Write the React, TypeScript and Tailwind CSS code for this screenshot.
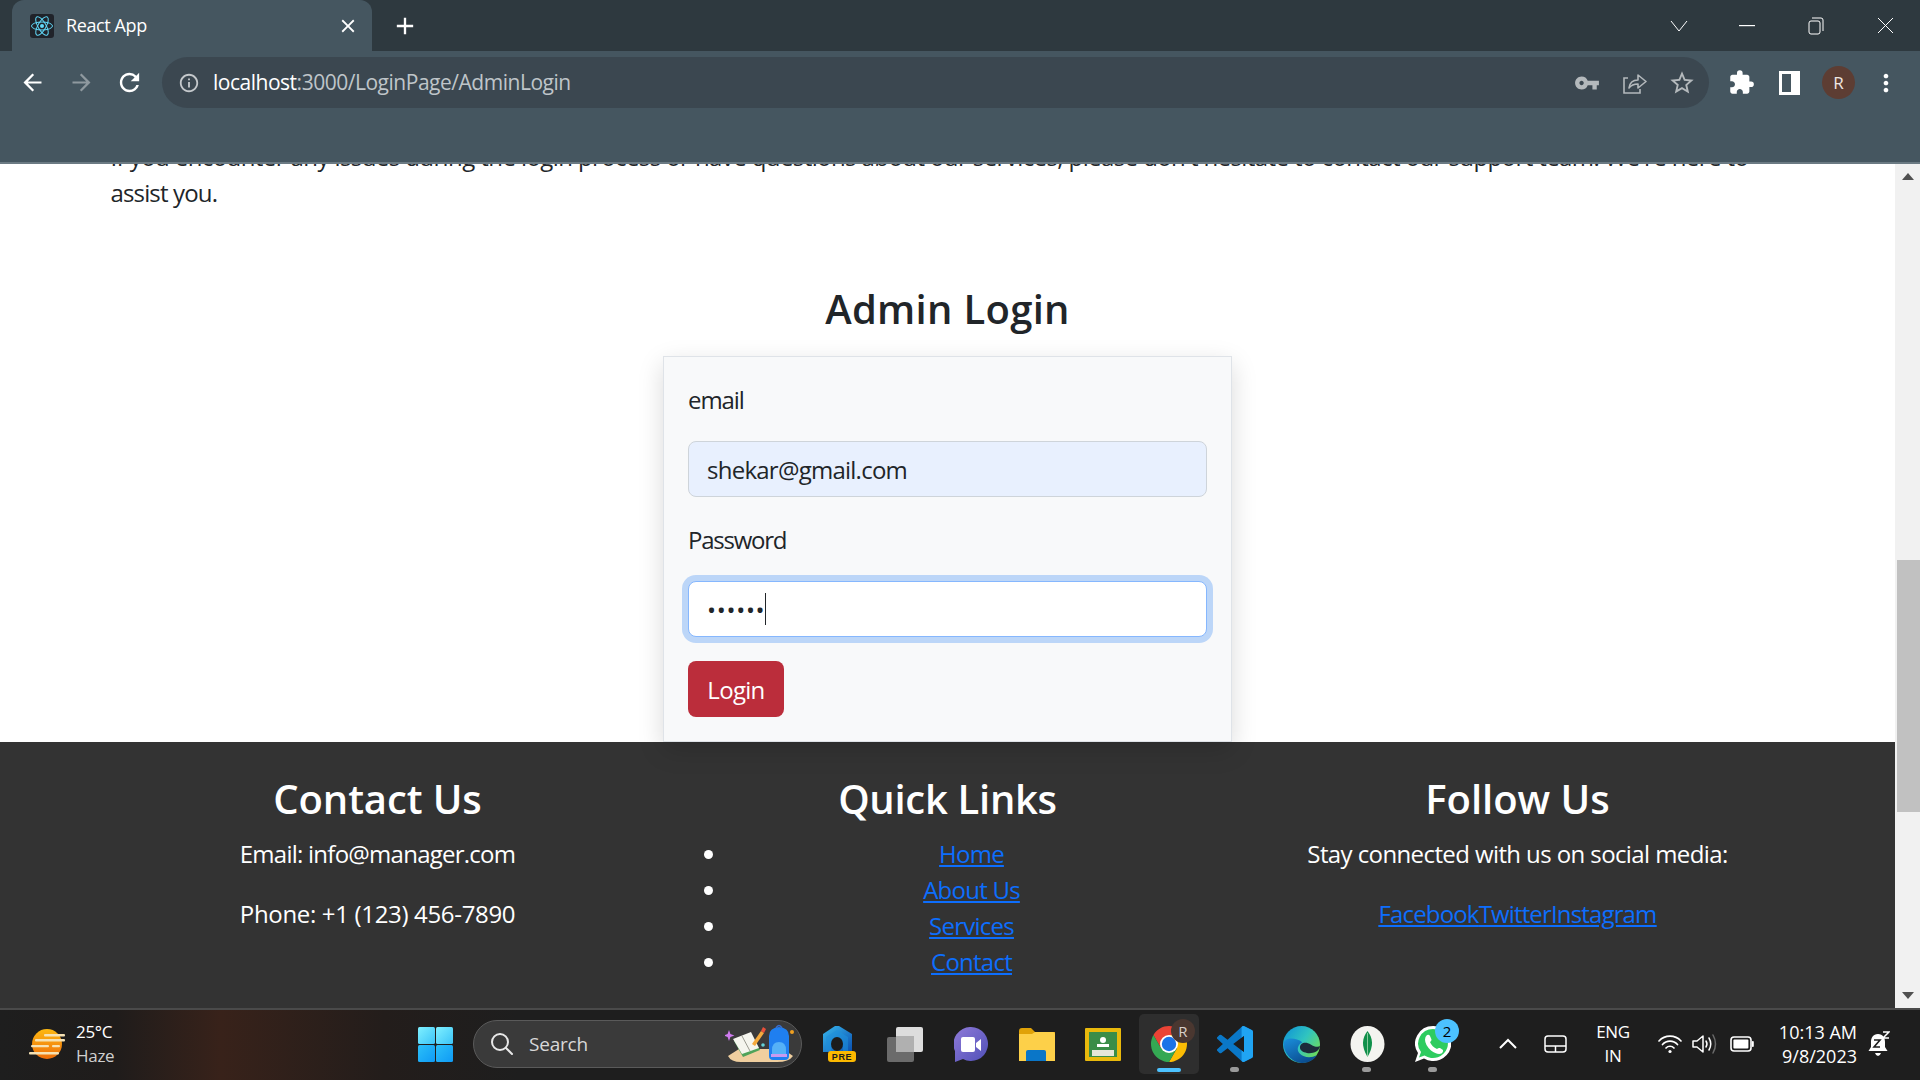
import React from "react";
import { MdArrowBack, MdArrowForward, MdRefresh, MdInfoOutline, MdVpnKey, MdStarBorder, MdExtension, MdMoreVert, MdClose, MdAdd } from "react-icons/md";

const SI = "M23.15 2.587L18.21.21a1.494 1.494 0 0 0-1.705.29l-9.46 8.63-4.12-3.128a.999.999 0 0 0-1.276.057L.327 7.261A1 1 0 0 0 .326 8.74L3.899 12 .326 15.26a1 1 0 0 0 .001 1.479L1.65 17.94a.999.999 0 0 0 1.276.057l4.12-3.128 9.46 8.63a1.492 1.492 0 0 0 1.704.29l4.942-2.377A1.5 1.5 0 0 0 24 20.06V3.939a1.5 1.5 0 0 0-.85-1.352zm-5.146 14.861L10.826 12l7.178-5.448v10.896z";

function ReactFav() {
  return (
    <svg width="24" height="24" viewBox="0 0 24 24" className="shrink-0">
      <rect width="24" height="24" rx="3" fill="#20232a" />
      <g fill="none" stroke="#61dafb" strokeWidth="1">
        <ellipse cx="12" cy="12" rx="10.5" ry="4" />
        <ellipse cx="12" cy="12" rx="10.5" ry="4" transform="rotate(60 12 12)" />
        <ellipse cx="12" cy="12" rx="10.5" ry="4" transform="rotate(120 12 12)" />
      </g>
      <circle cx="12" cy="12" r="2" fill="#61dafb" />
    </svg>
  );
}

function Weather() {
  return (
    <svg width="36" height="30" viewBox="0 0 36 30">
      <defs>
        <linearGradient id="wx" x1="0" y1="0" x2="0" y2="1"><stop offset="0" stopColor="#fdb913" /><stop offset="1" stopColor="#ee6d0a" /></linearGradient>
      </defs>
      <ellipse cx="18" cy="15" rx="15" ry="15" fill="url(#wx)" />
      <g fill="#f6e2b4">
        <rect x="15" y="5" width="21" height="2.4" rx="1" />
        <rect x="6" y="10" width="30" height="2.6" rx="1" />
        <rect x="2" y="16" width="18" height="2.2" rx="1" />
        <rect x="23" y="16" width="8" height="2.2" rx="1" />
        <rect x="0" y="23" width="30" height="2.4" rx="1" />
      </g>
    </svg>
  );
}

function WinLogo() {
  return (
    <svg width="35" height="35" viewBox="0 0 35 35">
      <defs>
        <linearGradient id="w1" x1="0" y1="0" x2="1" y2="1"><stop offset="0" stopColor="#7ff0ff" /><stop offset="1" stopColor="#3cc4f8" /></linearGradient>
        <linearGradient id="w2" x1="0" y1="0" x2="1" y2="1"><stop offset="0" stopColor="#2cc0f8" /><stop offset="1" stopColor="#0f9af5" /></linearGradient>
      </defs>
      <rect x="0" y="0" width="17" height="17" rx="1.5" fill="url(#w1)" />
      <rect x="18" y="0" width="17" height="17" rx="1.5" fill="url(#w1)" />
      <rect x="0" y="18" width="17" height="17" rx="1.5" fill="url(#w2)" />
      <rect x="18" y="18" width="17" height="17" rx="1.5" fill="url(#w2)" />
    </svg>
  );
}

function SearchDecor() {
  return (
    <svg width="70" height="40" viewBox="0 0 70 40">
      <path d="M3 32 L14 25 H58 L68 32 Q64 38 52 38 H16 Q6 38 3 32Z" fill="#f0cf9f" />
      <path d="M9 17 L26 10 L35 26 L18 33Z" fill="#4fa35a" />
      <path d="M8 15 L26 8 L34 24 L17 30Z" fill="#f5f5ee" />
      <path d="M17 12 L25 27" stroke="#9a9a90" strokeWidth="1" />
      <path d="M27 20 L36 7 L39 9 L30 22Z" fill="#f4a93c" />
      <path d="M36 7 L38 3 L41 5 L39 9Z" fill="#e8503a" />
      <circle cx="38" cy="21" r="1.8" fill="#63d1d8" />
      <path d="M44 12 Q44 4 54 3 Q64 4 64 12 V32 Q64 36 60 36 H48 Q44 36 44 32Z" fill="#1f7ff0" />
      <path d="M47 26 Q47 18 54 18 Q61 18 61 26 V31 H47Z" fill="#55b1f7" />
      <rect x="46" y="30" width="16" height="3" fill="#c89af0" />
      <path d="M51 4 Q54 -1 57 4" fill="none" stroke="#3a6fd0" strokeWidth="1.5" />
      <path d="M2 6 L3.4 10 L7.4 11.5 L3.4 13 L2 17 L0.6 13 L-3 11.5 L0.6 10Z" transform="translate(2 0)" fill="#d07bf0" />
      <circle cx="67" cy="8" r="2" fill="#f0a020" />
    </svg>
  );
}

function Copilot() {
  return (
    <svg width="36" height="36" viewBox="0 0 36 36">
      <defs>
        <linearGradient id="cp" x1="0" y1="0" x2="1" y2="1"><stop offset="0" stopColor="#38b8ee" /><stop offset="1" stopColor="#0a4fb0" /></linearGradient>
      </defs>
      <path d="M14 0 L18 0 L31 8 V26 H2 V8Z" fill="url(#cp)" />
      <path d="M16 4 L27 11 V25 H22 V18 A6 6 0 0 0 10 18 V25 H5 V11Z" fill="#1e90dc" opacity="0.55" />
      <ellipse cx="16" cy="18" rx="6" ry="7" fill="#1c1c1c" />
      <rect x="7" y="25" width="28" height="11" rx="3" fill="#fcb900" />
      <text x="21" y="34" textAnchor="middle" fontFamily="Liberation Sans" fontWeight="700" fontSize="9" fill="#1c1c1c" letterSpacing="0.6">PRE</text>
    </svg>
  );
}

function TaskView() {
  return (
    <div className="relative h-[35px] w-[36px]">
      <div className="absolute bottom-0 left-0 h-[25px] w-[27px] rounded-[2px] bg-[#6b6b6b]" />
      <div className="absolute right-0 top-0 h-[25px] w-[27px] rounded-[2px] bg-[#f2f2f2] opacity-90" />
      <div className="absolute left-[9px] top-[9px] h-[16px] w-[18px] bg-[#b0b0b0]" />
    </div>
  );
}

function Meet() {
  return (
    <svg width="34" height="35" viewBox="0 0 34 35">
      <defs>
        <linearGradient id="mt" x1="0" y1="0" x2="1" y2="1"><stop offset="0" stopColor="#8f7ad8" /><stop offset="1" stopColor="#5050b8" /></linearGradient>
      </defs>
      <path d="M17 0 A17 17 0 1 1 9 32 L1 35 L1 24 A17 17 0 0 1 17 0Z" fill="url(#mt)" />
      <rect x="7" y="10" width="14" height="15" rx="2" fill="#fff" />
      <path d="M22 16 L27 12 V24 L22 20Z" fill="#fff" />
    </svg>
  );
}

function Folder() {
  return (
    <svg width="36" height="33" viewBox="0 0 36 33">
      <path d="M0 3 Q0 0 3 0 H12 L16 4 H36 V12 H0Z" fill="#e0a208" />
      <path d="M0 6 H13 L16 4 H34 Q36 4 36 6 V33 H0Z" fill="#fdd049" />
      <path d="M7 33 V24 Q7 22 9 22 H25 Q27 22 27 24 V33Z" fill="#0a76c8" />
    </svg>
  );
}

function Classroom() {
  return (
    <svg width="36" height="33" viewBox="0 0 36 33">
      <rect width="36" height="33" rx="1" fill="#e9b90c" />
      <rect x="4" y="4" width="28" height="25" fill="#3a8d48" />
      <circle cx="18" cy="12" r="3" fill="#fff" />
      <rect x="12" y="16" width="12" height="3" fill="#fff" />
      <rect x="7" y="22" width="22" height="6" fill="#e6e6d8" />
    </svg>
  );
}

function Chrome() {
  return (
    <svg width="36" height="36" viewBox="4 4 40 40">
      <path d="M24 14H41.32A20 20 0 0 0 6.68 14L15.34 29 24 24Z" fill="#ea4335" />
      <path d="M41.32 14H24L32.66 29 24 44A20 20 0 0 0 41.32 14Z" fill="#fbbc04" />
      <path d="M24 44 32.66 29H15.34L6.68 14A20 20 0 0 0 24 44Z" fill="#34a853" />
      <circle cx="24" cy="24" r="10" fill="#fff" />
      <circle cx="24" cy="24" r="8" fill="#1a73e8" />
    </svg>
  );
}

function VSCode() {
  return (
    <svg width="36" height="36" viewBox="0 0 24 24">
      <defs>
        <clipPath id="vsr"><rect x="16.4" y="0" width="8" height="24" /></clipPath>
      </defs>
      <path d={SI} fill="#0a78c8" />
      <path d={SI} fill="#20a4f3" clipPath="url(#vsr)" />
    </svg>
  );
}

function Edge() {
  return (
    <svg width="37" height="37" viewBox="0 0 48 48">
      <defs>
        <linearGradient id="eg" x1="0" y1="0" x2="1" y2="0.7"><stop offset="0" stopColor="#0c8fd8" /><stop offset="0.55" stopColor="#30c4c0" /><stop offset="1" stopColor="#6fdc58" /></linearGradient>
        <linearGradient id="eb" x1="0" y1="0" x2="0.6" y2="1"><stop offset="0" stopColor="#1a8fdc" /><stop offset="1" stopColor="#0b4d90" /></linearGradient>
      </defs>
      <circle cx="24" cy="24" r="24" fill="url(#eg)" />
      <path d="M1 22 C1 38 14 48 26 48 C33 48 40 44 44 38 C36 42 27 41 22 36 C17 31 19 24 25 21 C17 15 3 14 1 22Z" fill="url(#eb)" />
      <path d="M22 28 C22 21 30 20 36 24 C40 27 46 28 48 26 C47 34 38 36 31 35 C26 34 22 32 22 28Z" fill="#1c2b3a" />
    </svg>
  );
}

function Mongo() {
  return (
    <svg width="35" height="36" viewBox="0 0 35 36">
      <ellipse cx="17.5" cy="18" rx="17" ry="18" fill="#f4f4f0" />
      <path d="M17.5 5 C23 12 24 20 17.5 31 C11 20 12 12 17.5 5Z" fill="#10904a" />
      <path d="M17.5 7 V31" stroke="#a3d9b0" strokeWidth="0.8" />
    </svg>
  );
}

function WhatsApp() {
  return (
    <svg width="36" height="36" viewBox="0 0 36 36">
      <path d="M18 0 A18 17.5 0 1 1 9 32.5 L0 36 L3 27 A18 17.5 0 0 1 18 0Z" fill="#fff" />
      <path d="M18 3 A15 14.5 0 1 1 9.5 29.5 L4 31.5 L6 26 A15 14.5 0 0 1 18 3Z" fill="#2ecc5f" />
      <path d="M12 9 Q14 8 15 10 L16.5 13.5 Q16.5 15 15 16 Q17 21 22 23 Q23.5 21.5 25 22 L28 24 Q28.5 26 26.5 27.5 Q22 29 16 24.5 Q10 19 10 13.5 Q10 10.5 12 9Z" fill="#fff" />
    </svg>
  );
}

function TrayIcons() {
  return (
    <>
      <svg width="20" height="12" viewBox="0 0 20 12" className="ml-[32px] shrink-0" fill="none" stroke="#fff" strokeWidth="2"><path d="M2 10 L10 2 L18 10" /></svg>
      <svg width="23" height="18" viewBox="0 0 23 18" className="ml-[26px] shrink-0" fill="none" stroke="#fff" strokeWidth="1.5"><rect x="1" y="1" width="21" height="16" rx="3" /><path d="M1 11 H22 M11.5 11 V17" /></svg>
    </>
  );
}

function Wifi() {
  return (
    <svg width="24" height="20" viewBox="0 0 24 20" fill="none" stroke="#fff" strokeWidth="1.7" strokeLinecap="round">
      <path d="M1 7 A15 15 0 0 1 23 7" /><path d="M4.5 10.5 A10 10 0 0 1 19.5 10.5" /><path d="M8 14 A5.5 5.5 0 0 1 16 14" />
      <circle cx="12" cy="17.5" r="1.6" fill="#fff" stroke="none" />
    </svg>
  );
}

function Volume() {
  return (
    <svg width="26" height="22" viewBox="0 0 26 22" fill="none" stroke="#fff" strokeWidth="1.5" strokeLinecap="round" strokeLinejoin="round">
      <path d="M1 8 H5 L11 3 V19 L5 14 H1Z" />
      <path d="M14 8 Q16 11 14 14" /><path d="M17 5 Q20.5 11 17 17" />
      <path d="M21 2 Q26 11 21 20" stroke="#6a6a6a" />
    </svg>
  );
}

function Battery() {
  return (
    <svg width="24" height="16" viewBox="0 0 24 16" fill="none">
      <rect x="1" y="1" width="20" height="14" rx="3" stroke="#fff" strokeWidth="1.6" />
      <rect x="3.4" y="3.4" width="15" height="9.2" rx="1" fill="#fff" />
      <rect x="21.8" y="5" width="2" height="6" rx="1" fill="#fff" />
    </svg>
  );
}

function BellZ() {
  return (
    <svg width="22" height="26" viewBox="0 0 22 26" className="ml-[11px] shrink-0">
      <path d="M10 3 C5 3 3 7 3 11 V16 L0.5 20 H19.5 L17 16 V11 C17 7 15 3 10 3Z" fill="#fff" />
      <path d="M7 22 H13 Q12 25 10 25 Q8 25 7 22Z" fill="#fff" />
      <path d="M6 9 H12 L6 16 H12" fill="none" stroke="#1e1e1e" strokeWidth="1.6" />
      <path d="M15 1 H21 L15 7 H21" fill="none" stroke="#fff" strokeWidth="1.5" />
    </svg>
  );
}

function Slot({ children, active, dot, badge, badgeClass }: { children: React.ReactNode; active?: boolean; dot?: boolean; badge?: string; badgeClass?: string }) {
  return (
    <div className="relative flex h-[72px] w-[66px] shrink-0 items-center justify-center">
      {active && <div className="absolute left-[3px] top-[6px] h-[60px] w-[60px] rounded-[5px] bg-[#2e2e2e]" />}
      <div className="relative">{children}</div>
      {badge && (
        <div className={"absolute left-[35px] top-[11px] flex h-[24px] w-[24px] items-center justify-center rounded-full text-[15px] leading-none " + badgeClass}>{badge}</div>
      )}
      {active && <div className="absolute bottom-[8px] left-[21px] h-[4px] w-[24px] rounded-full bg-[#4cc2ff]" />}
      {dot && <div className="absolute bottom-[8px] left-[28px] h-[5px] w-[9px] rounded-full bg-[#9a9a9a]" />}
    </div>
  );
}

function SidePanelIcon() {
  return (
    <div className="flex h-[24px] w-[21px] bg-white p-[3px] pr-[9px]"><div className="h-full w-full bg-[#455660]" /></div>
  );
}

function ShareIcon() {
  return (
    <svg width="24" height="22" viewBox="0 0 24 22" fill="none" stroke="#b4b9bc" strokeWidth="1.6">
      <path d="M5 6 H1 V21 H17 V17" />
      <path d="M6 16 Q7 8 15 8 V3 L23 9.5 L15 16 V12 Q9 12 6 16Z" strokeLinejoin="round" />
    </svg>
  );
}

export default function App() {
  const links = ["Home", "About Us", "Services", "Contact"];
  return (
    <div className="flex h-screen w-screen flex-col overflow-hidden bg-white font-['Open_Sans',sans-serif] text-[#212529]">
      {/* Tab strip */}
      <div className="flex h-[51px] shrink-0 items-center bg-[#2e393f] pl-[12px]">
        <div className="flex h-[51px] w-[360px] items-center rounded-t-[12px] bg-[#455660] pl-[18px] pr-[13px]">
          <ReactFav />
          <span className="ml-[12px] flex-1 text-[18px] tracking-[-0.4px] text-white">React App</span>
          <MdClose className="text-[22px] text-white" />
        </div>
        <MdAdd className="ml-[19px] text-[28px] text-white" />
        <div className="flex-1" />
        <div className="flex h-full items-center">
          <svg width="18" height="12" viewBox="0 0 18 12" fill="none" stroke="#fff" strokeWidth="1"><path d="M1 1 L9 11 L17 1" /></svg>
          <svg width="16" height="2" viewBox="0 0 16 2" className="ml-[51px]"><rect width="16" height="1.2" fill="#fff" /></svg>
          <svg width="16" height="18" viewBox="0 0 16 18" className="ml-[53px]" fill="none" stroke="#fff" strokeWidth="1"><rect x="1" y="4" width="11" height="13" rx="2" /><path d="M4 1 H13 Q15 1 15 3 V14" /></svg>
          <svg width="17" height="17" viewBox="0 0 17 17" className="ml-[53px] mr-[26px]" fill="none" stroke="#fff" strokeWidth="1"><path d="M1 1 L16 16 M16 1 L1 16" /></svg>
        </div>
      </div>

      {/* Toolbar */}
      <div className="h-[113px] shrink-0 border-b-2 border-[#6b7a83] bg-[#455660]">
        <div className="flex h-[63px] items-center pl-[20px] pr-[20px]">
          <MdArrowBack className="-ml-[1px] text-[27px] text-white" />
          <MdArrowForward className="ml-[22px] text-[27px] text-[#8f999f]" />
          <MdRefresh className="ml-[20px] text-[29px] text-white" />
          <div className="ml-[18px] flex h-[51px] w-[1548px] items-center rounded-full bg-[#3b4750] pl-[16px] pr-[13px]">
            <MdInfoOutline className="text-[22px] text-[#c4c8cb]" />
            <span className="ml-[13px] text-[21px] tracking-[-0.48px]"><span className="text-white">localhost</span><span className="text-[#bfc5c9]">:3000/LoginPage/AdminLogin</span></span>
            <div className="flex-1" />
            <MdVpnKey className="text-[26px] text-[#b4b9bc]" />
            <div className="ml-[23px]"><ShareIcon /></div>
            <MdStarBorder className="ml-[21px] text-[28px] text-[#b4b9bc]" />
          </div>
          <MdExtension className="ml-[19px] text-[27px] text-white" />
          <div className="ml-[24px]"><SidePanelIcon /></div>
          <div className="ml-[22px] flex h-[33px] w-[33px] items-center justify-center rounded-full bg-[#5d3d33] text-[17px] text-[#f0e6e2]">R</div>
          <MdMoreVert className="ml-[17px] text-[28px] text-white" />
        </div>
      </div>

      {/* Page + scrollbar */}
      <div className="flex min-h-0 flex-1">
        <div className="flex min-w-0 flex-1 flex-col overflow-hidden">
          <main className="flex h-[578px] shrink-0 flex-col items-center overflow-visible">
            <div className="w-[1710px] px-[18px]">
              <p className="-mt-[25px] whitespace-nowrap text-[24px] leading-[36px] tracking-[-0.59px]">
                If you encounter any issues during the login process or have questions about our services, please don't hesitate to contact our support team. We're here to
                <br />
                <span className="tracking-[-0.85px]">assist you.</span>
              </p>
            </div>
            <h2 className="mt-[74px] text-center text-[40px] font-semibold leading-[48px] tracking-[0.3px]">Admin Login</h2>
            <form className="relative z-10 mt-[23px] w-[569px] border border-[#dfe3e8] bg-[#f8f9fa] p-[24px] shadow-[0_8px_24px_rgba(0,0,0,0.15)]">
              <label className="mb-[24px] block h-[36px] text-[24px] leading-[38px] tracking-[-1.1px]">email</label>
              <input readOnly value="shekar@gmail.com" className="mb-[24px] block h-[56px] w-full rounded-[8px] border border-[#ced4da] bg-[#e8f0fe] px-[18px] text-[24px] tracking-[-0.75px] text-[#212529] outline-none" />
              <label className="mb-[24px] block h-[36px] text-[24px] leading-[38px] tracking-[-1.25px]">Password</label>
              <div className="relative mb-[24px]">
                <input readOnly type="password" value="shekar" className="block h-[56px] w-full rounded-[8px] border border-[#86b7fe] bg-white px-[18px] text-[24px] tracking-[0.7px] text-[#212529] shadow-[0_0_0_6px_#bcd6f8] outline-none" />
                <div className="absolute left-[77px] top-[12px] h-[32px] w-px bg-[#212529]" />
              </div>
              <button type="button" className="block h-[56px] w-[96px] rounded-[8px] bg-[#bb2d3b] text-center text-[24px] leading-[58px] tracking-[-0.7px] text-white">Login</button>
            </form>
          </main>

          {/* Footer */}
          <footer className="min-h-0 flex-1 bg-[#333333] text-white">
            <div className="mx-auto grid w-[1710px] grid-cols-3 pt-[33px] text-center text-[24px] leading-[36px] tracking-[-0.75px]">
              <div>
                <h2 className="mb-[13px] text-[40px] font-semibold leading-[48px] tracking-[-0.1px]">Contact Us</h2>
                <p className="mb-[24px]">Email: info@manager.com</p>
                <p className="tracking-[-0.33px]">Phone: +1 (123) 456-7890</p>
              </div>
              <div>
                <h2 className="mb-[13px] text-[40px] font-semibold leading-[48px] tracking-[-0.3px]">Quick Links</h2>
                <ul className="list-disc pl-[65px] pr-[17px]">
                  {links.map((l) => (
                    <li key={l}><a href="#" className="text-[#0d6efd] underline">{l}</a></li>
                  ))}
                </ul>
              </div>
              <div>
                <h2 className="mb-[13px] text-[40px] font-semibold leading-[48px] tracking-[0px]">Follow Us</h2>
                <p className="mb-[24px] tracking-[-0.6px]">Stay connected with us on social media:</p>
                <p className="tracking-[-0.85px] text-[#0d6efd] underline"><a href="#">Facebook</a><a href="#">Twitter</a><a href="#">Instagram</a></p>
              </div>
            </div>
          </footer>
        </div>
        {/* Scrollbar */}
        <div className="flex w-[25px] shrink-0 flex-col bg-[#f1f1f1]">
          <div className="flex h-[25px] shrink-0 items-center justify-center">
            <div className="h-0 w-0 border-x-[6px] border-b-[7px] border-x-transparent border-b-[#505050]" />
          </div>
          <div className="min-h-0 flex-1">
            <div className="ml-[2px] mt-[371px] h-[252px] w-[23px] bg-[#c1c1c1]" />
          </div>
          <div className="flex h-[25px] shrink-0 items-center justify-center">
            <div className="h-0 w-0 border-x-[6px] border-t-[7px] border-x-transparent border-t-[#505050]" />
          </div>
        </div>
      </div>

      {/* Taskbar */}
      <div className="flex h-[72px] shrink-0 items-center border-t-2 border-[#4a4a4a] bg-[linear-gradient(90deg,#1e1e1e_0%,#1f1c1b_6%,#38221a_11.5%,#231d1b_20%,#1e1e1e_27%)] pb-[2px] text-white">
        <div className="ml-[29px] shrink-0"><Weather /></div>
        <div className="ml-[11px] w-[60px] shrink-0 text-[17px] leading-[24px] tracking-[-0.3px]">
          <div>25°C</div>
          <div className="text-[#cfcfcf]">Haze</div>
        </div>
        <div className="ml-[282px] shrink-0"><WinLogo /></div>
        <div className="ml-[20px] flex h-[48px] w-[329px] shrink-0 items-center rounded-full border border-[#5a5a5a] bg-[#3a3a3a] pl-[16px]">
          <svg width="24" height="24" viewBox="0 0 24 24" fill="none" stroke="#e8e8e8" strokeWidth="2"><circle cx="10" cy="10" r="8" /><path d="M16 16 L22 22" strokeLinecap="round" /></svg>
          <span className="ml-[15px] text-[19px] tracking-[-0.2px] text-[#d8d8d8]">Search</span>
          <div className="flex-1" />
          <div className="mr-[6px]"><SearchDecor /></div>
        </div>
        <div className="ml-[4px] flex shrink-0">
          <Slot><Copilot /></Slot>
          <Slot><TaskView /></Slot>
          <Slot><Meet /></Slot>
          <Slot><Folder /></Slot>
          <Slot><Classroom /></Slot>
          <Slot active badge="R" badgeClass="bg-[#4a3730] text-[#d8cfca]"><Chrome /></Slot>
          <Slot dot><VSCode /></Slot>
          <Slot><Edge /></Slot>
          <Slot dot><Mongo /></Slot>
          <Slot dot badge="2" badgeClass="bg-[#4cc2ff] text-black"><WhatsApp /></Slot>
        </div>
        <TrayIcons />
        <div className="ml-[23px] w-[46px] shrink-0 text-center text-[17px] leading-[24px] tracking-[-0.3px]">
          <div>ENG</div>
          <div>IN</div>
        </div>
        <div className="ml-[22px] flex shrink-0 items-center gap-[10px]">
          <Wifi />
          <Volume />
          <div className="ml-[2px]"><Battery /></div>
        </div>
        <div className="ml-[17px] w-[86px] shrink-0 text-right text-[18px] leading-[24px] tracking-[0px]">
          <div>10:13 AM</div>
          <div>9/8/2023</div>
        </div>
        <BellZ />
      </div>
    </div>
  );
}
